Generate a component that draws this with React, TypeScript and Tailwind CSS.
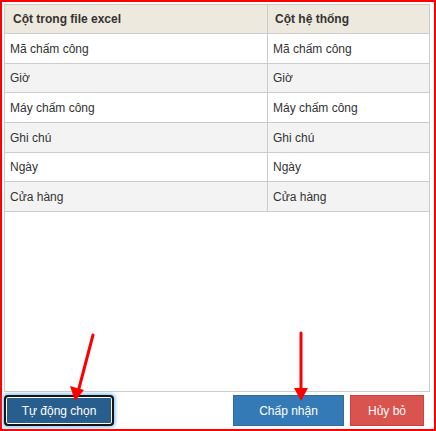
import React from 'react';

const rows = [
  { label: 'Mã chấm công', h: 'h-[30px]' },
  { label: 'Giờ', h: 'h-[29px]' },
  { label: 'Máy chấm công', h: 'h-[30px]' },
  { label: 'Ghi chú', h: 'h-[30px]' },
  { label: 'Ngày', h: 'h-[29px]' },
  { label: 'Cửa hàng', h: 'h-[30px]' },
];

export default function App() {
  return (
    <div className="relative w-[436px] h-[431px] bg-white border-2 border-[#ff0000] pt-[2px] pl-[2px] pr-[4px] flex flex-col font-['Liberation_Sans',Arial,sans-serif] text-[12px] text-[#333]">
      {/* mapping table */}
      <div className="h-[388px] border border-[#cccccc] bg-white">
        <div className="grid grid-cols-[263px_1fr] bg-[#ede9de] border-b border-[#cccccc] h-[29px] items-center font-bold">
          <div className="pl-[8px] h-full flex items-center border-r border-[#cccccc]">Cột trong file excel</div>
          <div className="pl-[7px]">Cột hệ thống</div>
        </div>
        {rows.map((r, i) => (
          <div
            key={i}
            className={`grid grid-cols-[263px_1fr] ${r.h} border-b border-[#cccccc] ${i % 2 === 1 ? 'bg-[#f3f3f3]' : 'bg-white'}`}
          >
            <div className="pl-[5px] flex items-center border-r border-[#cccccc]">{r.label}</div>
            <div className="pl-[5px] flex items-center">{r.label}</div>
          </div>
        ))}
      </div>

      {/* footer buttons */}
      <div className="flex items-center mt-[3px] h-[31px] pr-[6px]">
        <button className="h-[31px] w-[110px] rounded-[4px] border-2 border-[#151515] bg-[#285e8e] text-white shadow-[inset_0_0_0_1px_#ffffff,0_0_3px_2px_rgba(102,175,233,0.6)]">
          Tự động chọn
        </button>
        <div className="flex-1" />
        <button className="h-[31px] w-[111px] bg-[#337ab7] border border-[#2e6da4] text-white">Chấp nhận</button>
        <button className="h-[31px] w-[74px] ml-[6px] bg-[#d9534f] border border-[#d43f3a] text-white">Hủy bỏ</button>
      </div>

      {/* annotation arrows */}
      <svg className="absolute left-[-2px] top-[-2px] pointer-events-none" width="436" height="431">
        <line x1="93" y1="335" x2="78" y2="392" stroke="#ff0000" strokeWidth="3" strokeLinecap="round" />
        <polygon points="75,401 70,386 84,390" fill="#ff0000" />
        <line x1="301" y1="333" x2="301" y2="392" stroke="#ff0000" strokeWidth="3" strokeLinecap="round" />
        <polygon points="301,401 294,388 308,388" fill="#ff0000" />
      </svg>
    </div>
  );
}
